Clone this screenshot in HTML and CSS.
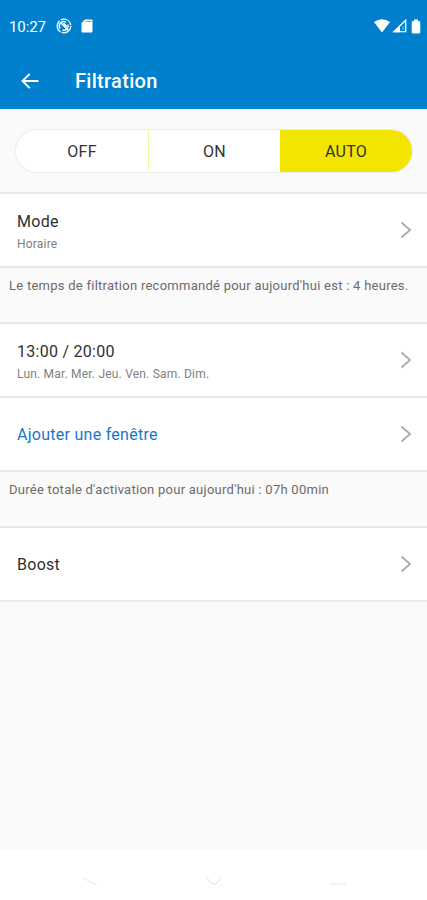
FILE: index.html
```html
<!DOCTYPE html>
<html lang="fr">

<head>
    <meta charset="UTF-8">
    <meta name="viewport" content="width=device-width, initial-scale=1.0">
    <title>Filtration</title>
    <link rel="stylesheet" href="styles.css">
</head>

<body>
    <header class="header">
        <div class="status-bar">
            <span class="time">10:27</span>
            <svg class="sync-icon" width="16" height="16" viewBox="0 0 16 16" fill="none" stroke="#fff">
                <circle cx="8" cy="8" r="6.8" stroke-width="1.3" stroke-dasharray="13 1.24"/>
                <path d="M4.2 10.5A4.4 4.4 0 0 1 10 4.2M12 6.5A4.4 4.4 0 0 1 6.5 12" stroke-width="1.4"/>
                <path d="M5 5L12.2 12.2M7.5 5.2L10.8 8.5" stroke-width="1.6"/>
            </svg>
            <svg class="card-icon" width="12" height="14" viewBox="0 0 12 14">
                <path d="M4 0.5H10.5Q11.5 0.5 11.5 1.5V12.5Q11.5 13.5 10.5 13.5H1.5Q0.5 13.5 0.5 12.5V4Z" fill="#fff"/>
                <path d="M4.5 2.5H10.5" stroke="#0080cc" stroke-width="1" stroke-opacity="0.6"/>
            </svg>
            <div class="status-right">
                <svg width="16" height="14" viewBox="0 0 16 14">
                    <path d="M0 3Q8 -2.6 16 3L8 13.5Z" fill="#fff"/>
                </svg>
                <svg width="15" height="14" viewBox="0 0 15 14">
                    <path d="M1.8 12.7L13.7 1.2V12.7Z" fill="none" stroke="#fff" stroke-width="1.3"/>
                    <path d="M1 13.2L8 6.5V13.2Z" fill="#fff"/>
                    <path d="M11 7V11" stroke="#fff" stroke-width="1" stroke-opacity="0.5"/>
                </svg>
                <svg class="battery" width="10" height="15" viewBox="0 0 10 15">
                    <path d="M3 0.5H7V2H8Q9.3 2 9.3 3.3V13.2Q9.3 14.5 8 14.5H2Q0.7 14.5 0.7 13.2V3.3Q0.7 2 2 2H3Z" fill="#fff"/>
                </svg>
            </div>
        </div>
        <div class="title-bar">
            <svg width="18" height="16" viewBox="0 0 18 16" fill="none" stroke="#fff" stroke-width="1.9">
                <path d="M8.7 0.8L1.5 8L8.7 15.2M1.5 8H17.5"/>
            </svg>
            <h1>Filtration</h1>
        </div>
    </header>

    <main class="content">
        <div class="toggle-container">
            <div class="toggle-buttons">
                <button>OFF</button>
                <button>ON</button>
                <button class="selected">AUTO</button>
            </div>
        </div>

        <div class="row">
            <div>
                <div class="row-title">Mode</div>
                <div class="row-detail">Horaire</div>
            </div>
            <svg class="chevron" width="12" height="18" viewBox="0 0 12 18"><path d="M1.5 1.5L10 9L1.5 16.5"/></svg>
        </div>
        <p class="note">Le temps de filtration recommandé pour aujourd'hui est : 4 heures.</p>
        <div class="row">
            <div>
                <div class="row-title">13:00 / 20:00</div>
                <div class="row-detail">Lun. Mar. Mer. Jeu. Ven. Sam. Dim.</div>
            </div>
            <svg class="chevron" width="12" height="18" viewBox="0 0 12 18"><path d="M1.5 1.5L10 9L1.5 16.5"/></svg>
        </div>
        <div class="row">
            <div class="row-title add">Ajouter une fenêtre</div>
            <svg class="chevron" width="12" height="18" viewBox="0 0 12 18"><path d="M1.5 1.5L10 9L1.5 16.5"/></svg>
        </div>
        <p class="note">Durée totale d'activation pour aujourd'hui : 07h 00min</p>
        <div class="row last">
            <div class="row-title">Boost</div>
            <svg class="chevron" width="12" height="18" viewBox="0 0 12 18"><path d="M1.5 1.5L10 9L1.5 16.5"/></svg>
        </div>
    </main>

    <!-- Android navigation -->
    <nav class="nav-bar">
        <svg width="16" height="16" viewBox="0 0 16 16"><path d="M1 5L15 12"/></svg>
        <svg width="16" height="16" viewBox="0 0 16 16"><path d="M1 4Q2 8 8 11.5Q14 8 15 4"/></svg>
        <svg width="18" height="16" viewBox="0 0 18 16"><path d="M1 11H17"/></svg>
    </nav>
</body>

</html>
```
FILE: styles.css
```css
* {
    box-sizing: border-box;
}

body {
    display: flex;
    flex-direction: column;
    height: 100vh;
    margin: 0;
    font-family: Roboto, "Liberation Sans", sans-serif;
    color: #303030;
    background-color: #fff;
}

svg {
    display: block;
    flex-shrink: 0;
}

.header {
    height: 109px;
    background-color: #0080cc;
    color: white;
}

.status-bar {
    display: flex;
    align-items: center;
    height: 52px;
    padding: 0 6px 0 9px;
}

.time {
    width: 47px;
    padding-top: 1px;
    font-size: 15px;
    letter-spacing: -0.1px;
}

.card-icon {
    margin-left: 9px;
}

.status-right {
    display: flex;
    align-items: center;
    gap: 2px;
    margin-left: auto;
}

.battery {
    margin-left: 2px;
}

.title-bar {
    display: flex;
    align-items: center;
    height: 57px;
    padding-left: 21px;
}

.title-bar h1 {
    margin: 0 0 0 36px;
    font-size: 20px;
    font-weight: 500;
    line-height: 24px;
    letter-spacing: 0.3px;
}

.content {
    flex: 1;
    background-color: #fafafa;
}

.toggle-container {
    height: 83px;
    padding: 21px 15px 0 16px;
}

.toggle-buttons {
    display: grid;
    grid-template-columns: 133px 131px 132px;
    height: 42px;
    border-radius: 21px;
    overflow: hidden;
    background-color: white;
    box-shadow: 0 0 2px rgba(0, 0, 0, 0.2);
}

.toggle-buttons button {
    padding: 1px 0 0;
    border: none;
    background-color: white;
    color: #333;
    font-family: inherit;
    font-size: 16px;
    letter-spacing: 0.3px;
}

.toggle-buttons button:first-child {
    border-right: 1px solid #f5f5a0;
}

.toggle-buttons button.selected {
    background-color: #f2e500;
}

.row {
    display: flex;
    align-items: center;
    justify-content: space-between;
    height: 74px;
    padding: 0 15px 0 17px;
    border-top: 2px solid #e7e7e7;
    background-color: white;
}

.row.last {
    height: 76px;
    border-bottom: 2px solid #ededed;
}

.row-title {
    padding-top: 2px;
    font-size: 16px;
    line-height: 24px;
    letter-spacing: 0.27px;
}

.row-detail {
    margin-top: 1px;
    font-size: 12px;
    line-height: 18px;
    letter-spacing: 0.2px;
    color: #808080;
}

.add {
    color: #1976c9;
}

.chevron {
    fill: none;
    stroke: #aaa;
    stroke-width: 1.8;
}

.note {
    height: 56px;
    margin: 0;
    padding: 9px 8px 0 9px;
    border-top: 2px solid #e7e7e7;
    font-size: 13px;
    line-height: 18px;
    letter-spacing: 0.26px;
    color: #6b6b6b;
    white-space: nowrap;
}

.nav-bar {
    display: flex;
    justify-content: space-between;
    height: 50px;
    padding: 23px 80px 0 82px;
}

.nav-bar svg {
    fill: none;
    stroke: #e9e9e9;
    stroke-width: 1.2;
}
```
